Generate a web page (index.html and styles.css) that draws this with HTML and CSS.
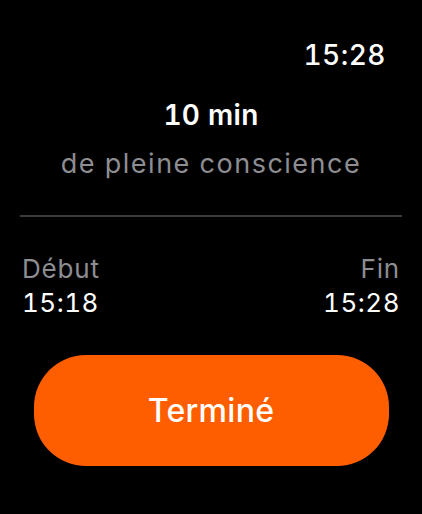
FILE: index.html
```html
<!DOCTYPE html>
<html lang="fr">
<head>
<meta charset="utf-8">
<link rel="stylesheet" href="styles.css">
</head>
<body>
<div class="screen">
  <div class="status"><span class="clock">15:28</span></div>
  <div class="summary">
    <div class="duration">10 min</div>
    <div class="kind">de pleine conscience</div>
  </div>
  <div class="divider"></div>
  <div class="times">
    <div class="time-col">
      <div class="label">Début</div>
      <div class="value">15:18</div>
    </div>
    <div class="time-col right">
      <div class="label">Fin</div>
      <div class="value">15:28</div>
    </div>
  </div>
  <div class="action">
    <button class="done">Terminé</button>
  </div>
</div>
</body>
</html>
```
FILE: styles.css
```css
html, body {
  margin: 0;
  padding: 0;
  background: #000;
}
body {
  width: 422px;
  height: 514px;
  overflow: hidden;
  font-family: Inter, "Noto Sans", sans-serif;
  color: #fff;
  font-variant-numeric: tabular-nums;
}
.screen {
  display: flex;
  flex-direction: column;
  padding: 38px 20px 0 20px;
}
.status {
  display: flex;
  justify-content: flex-end;
  padding-right: 16px;
}
.clock {
  font-size: 28px;
  line-height: 34px;
  font-weight: 500;
  letter-spacing: 0.5px;
}
.summary {
  margin-top: 26px;
  text-align: center;
}
.duration {
  font-size: 28px;
  line-height: 34px;
  font-weight: 600;
  letter-spacing: 0.3px;
}
.kind {
  margin-top: 16px;
  font-size: 27px;
  line-height: 32px;
  color: #8d8d92;
  letter-spacing: 1.5px;
}
.divider {
  margin-top: 35px;
  height: 2px;
  background: #3c3c3e;
}
.times {
  margin-top: 34px;
  display: flex;
  justify-content: space-between;
  padding: 0 2px;
}
.time-col.right {
  text-align: right;
}
.label {
  font-size: 26px;
  line-height: 35px;
  color: #8d8d92;
  letter-spacing: 0.8px;
}
.value {
  font-size: 26px;
  line-height: 34px;
  letter-spacing: 0.5px;
}
.action {
  margin-top: 35px;
  display: flex;
  justify-content: center;
}
.done {
  width: 355px;
  height: 111px;
  border: none;
  border-radius: 52px;
  background: #ff5e00;
  color: #fff;
  font-family: Inter, "Noto Sans", sans-serif;
  font-size: 32px;
  font-weight: 500;
  letter-spacing: 0.3px;
  padding: 0;
}
```
